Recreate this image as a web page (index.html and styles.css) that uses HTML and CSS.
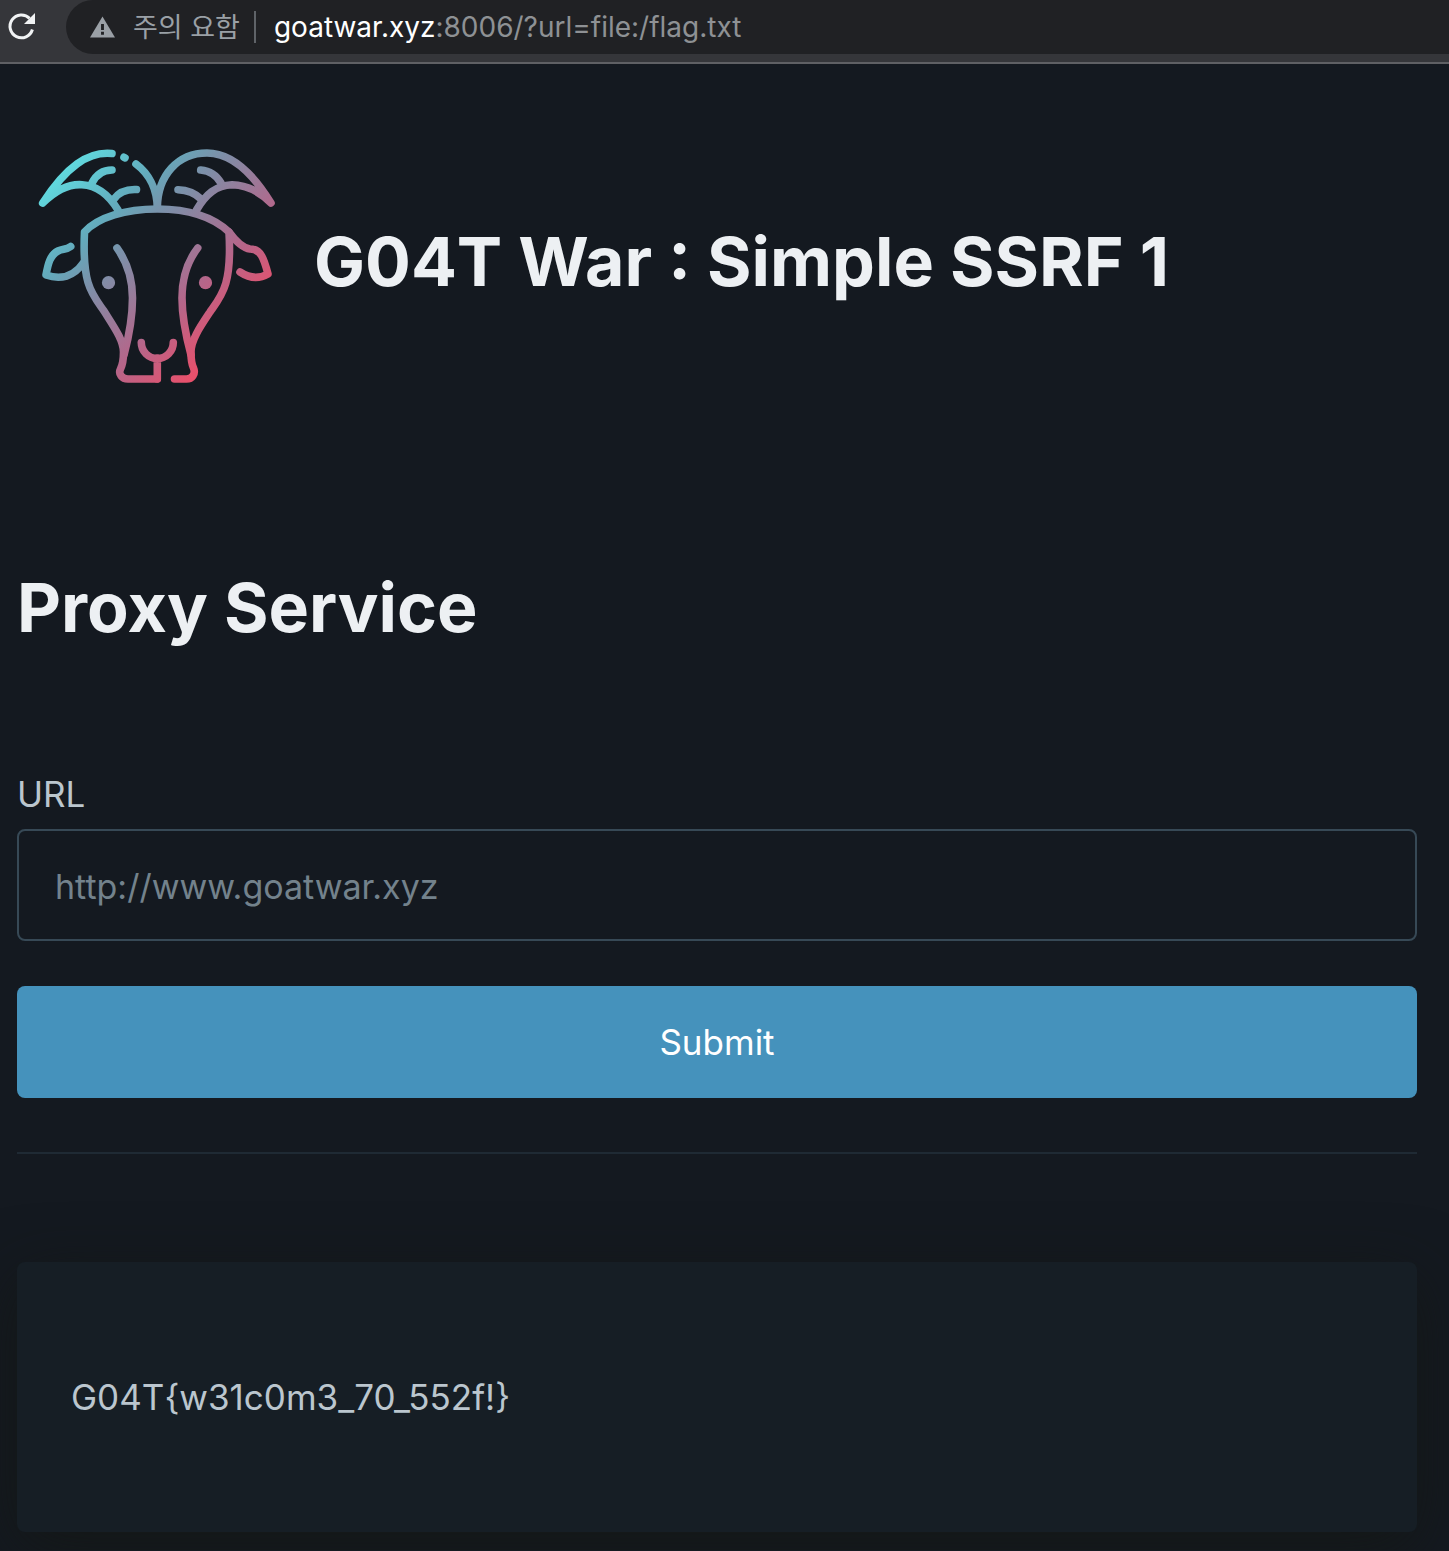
FILE: index.html
```
<!DOCTYPE html>
<html lang="ko">
<head>
    <meta charset="UTF-8">
    <meta name="viewport" content="width=device-width, initial-scale=1.0">
    <title>G04T War : Simple SSRF 1</title>
    <link rel="stylesheet" href="styles.css">
</head>
<body>
    <header class="toolbar">
        <button type="button" class="reload-btn" aria-label="Reload">
            <svg width="32" height="32" viewBox="0 0 32 32">
                <path d="M26.4 19.5A11.4 11.4 0 1 1 23.6 8.4" fill="none" stroke="#f1f3f4" stroke-width="3"/>
                <path d="M29 3V14H18Z" fill="#f1f3f4"/>
            </svg>
        </button>
        <div class="address-bar">
            <svg class="warning-icon" width="25" height="22" viewBox="0 0 26 22">
                <path d="M13 0L26 22H0Z" fill="#9aa0a6"/>
                <path d="M11.5 8h3v6h-3zM11.5 16h3v3h-3z" fill="#202124"/>
            </svg>
            <span class="warning-text">주의 요함</span>
            <span class="divider"></span>
            <div class="address" role="textbox" aria-label="Address" contenteditable="true" spellcheck="false"><span class="host">goatwar.xyz</span>:8006/?url=file:/flag.txt</div>
        </div>
    </header>

    <main class="container">
        <div class="title">
            <svg class="logo" width="256" height="256" viewBox="0 0 256 256" role="img" aria-label="Goat">
                <defs>
                    <linearGradient id="goat" gradientUnits="userSpaceOnUse" x1="30" y1="30" x2="200" y2="200">
                        <stop offset="0" stop-color="#60dbe0"/>
                        <stop offset="0.28" stop-color="#64a9bb"/>
                        <stop offset="0.42" stop-color="#7b91aa"/>
                        <stop offset="0.75" stop-color="#b5668a"/>
                        <stop offset="1" stop-color="#e8506b"/>
                    </linearGradient>
                </defs>
                <g fill="none" stroke="url(#goat)" stroke-width="7.6" stroke-linecap="round" stroke-linejoin="round">
                    <!-- horns -->
                    <path d="M82 13.5C58 11 36 27 12.7 63C28 48 42 44 52 44.7C68 45.5 79 55 88 70"/>
                    <path d="M62 43C66 35 73 30 82 30"/>
                    <path d="M84 59C89 52 96 49 106.5 49.5"/>
                    <path d="M94 17.3L95 17.8"/>
                    <path d="M106 24C118 33 127 48 127.3 68C127.6 35 148 13 177 13C200 13 222 32 241 63C226 48 212 45 202 44.8C186 45.5 176 54 166.5 70"/>
                    <path d="M170.7 30C181 31 187 36 191 43"/>
                    <path d="M148 49.7C158 50 165 53 171 59"/>
                    <!-- face -->
                    <path d="M127.3 239H98C92 239 88 234 90.5 229C93 224 93.5 219 93.5 212C93.5 200 84 187 74 171C62 154 52 145 54.5 92C68 77 96 69 127.3 69C158 69 183 77 199 92C202 145 192 155 180 172C170 187 161 200 161 212C161 219 161.5 224 163.5 228C166 234 162 239 156.5 239H144.5"/>
                    <path d="M87 108C97 122 102.5 137 102.5 158C102.5 180 98 200 94 215"/>
                    <path d="M167.7 108C157 122 152 137 152 158C152 180 157 200 161 215"/>
                    <path d="M111.3 202.5A16 16 0 0 0 143.3 202.5M127.3 218V239"/>
                    <!-- ears -->
                    <path d="M40.7 106.5C36 110 33 108.5 28 111C20 115 18 124 16 135C30 140 44 137 54 122"/>
                    <path d="M199 92C207 103 213 108 220 109C231 109 234 119 238 134C229 139 219 138 210 132"/>
                </g>
                <g fill="url(#goat)">
                    <circle cx="78.5" cy="142.7" r="6.6"/>
                    <circle cx="175.5" cy="142.7" r="6.6"/>
                </g>
            </svg>
            <h1>G04T War : Simple SSRF 1</h1>
        </div>

        <h2>Proxy Service</h2>

        <form class="proxy-form" method="get">
            <label for="url">URL</label>
            <input type="text" id="url" name="url" placeholder="http://www.goatwar.xyz">
            <button type="submit" class="submit-btn">Submit</button>
        </form>

        <hr>

        <article class="result">G04T{w31c0m3_70_552f!}</article>
    </main>
</body>
</html>
```
FILE: styles.css
```
* {
    box-sizing: border-box;
}
body {
    margin: 0;
    background-color: #141920;
    color: #bbc6ce;
    font-family: Inter, "Noto Sans CJK KR", sans-serif;
    font-size: 35px;
    line-height: 54px;
}

/* browser toolbar */
.toolbar {
    display: flex;
    align-items: flex-start;
    gap: 28px;
    height: 64px;
    padding-left: 6px;
    background-color: #35363a;
    border-bottom: 2px solid #5f6064;
}
.reload-btn {
    display: flex;
    align-items: center;
    width: 32px;
    height: 52px;
    padding: 0;
    border: none;
    background: none;
    cursor: pointer;
}
.address-bar {
    display: flex;
    flex: 1;
    align-items: center;
    height: 54px;
    padding-left: 24px;
    background-color: #202124;
    border-radius: 27px 0 0 27px;
    color: #8e9194;
    font-size: 28px;
}
.warning-text {
    margin-left: 18px;
    padding-bottom: 3px;
    color: #9aa0a6;
    font-family: "Noto Sans CJK KR", sans-serif;
    font-size: 27px;
}
.divider {
    width: 2px;
    height: 32px;
    margin: 0 18px 0 14px;
    background-color: #5f6368;
}
.address {
    outline: none;
    white-space: nowrap;
}
.host {
    color: #fff;
}

/* page */
.container {
    padding: 76px 32px 18px 17px;
}
.title {
    display: flex;
    align-items: center;
    gap: 28px;
    padding-left: 13px;
}
h1,
h2 {
    margin: 0;
    color: #edf0f3;
    font-size: 68px;
    font-weight: 700;
    line-height: 90px;
}
h1 {
    padding-bottom: 14px;
}
h2 {
    margin-top: 166px;
}
.proxy-form {
    display: flex;
    flex-direction: column;
    margin-top: 115px;
}
.proxy-form label {
    margin-bottom: 8px;
}
.proxy-form input,
.submit-btn {
    width: 100%;
    height: 112px;
    border-radius: 8px;
    font: inherit;
}
.proxy-form input {
    padding: 2px 36px 0;
    border: 2px solid #374956;
    background-color: transparent;
    color: #bbc6ce;
    font-size: 34px;
}
.proxy-form input::placeholder {
    color: #73828c;
    opacity: 1;
}
.submit-btn {
    margin-top: 45px;
    border: none;
    background-color: #4592bc;
    color: #fff;
    cursor: pointer;
}
.submit-btn:hover {
    background-color: #3b82a9;
}
hr {
    margin: 54px 0 0;
    border: none;
    border-top: 2px solid #1f2a34;
}
.result {
    margin-top: 108px;
    padding: 108px 54px;
    border-radius: 8px;
    background-color: #161e25;
    box-shadow: 0 16px 64px rgba(20, 24, 20, 0.8);
}
```
